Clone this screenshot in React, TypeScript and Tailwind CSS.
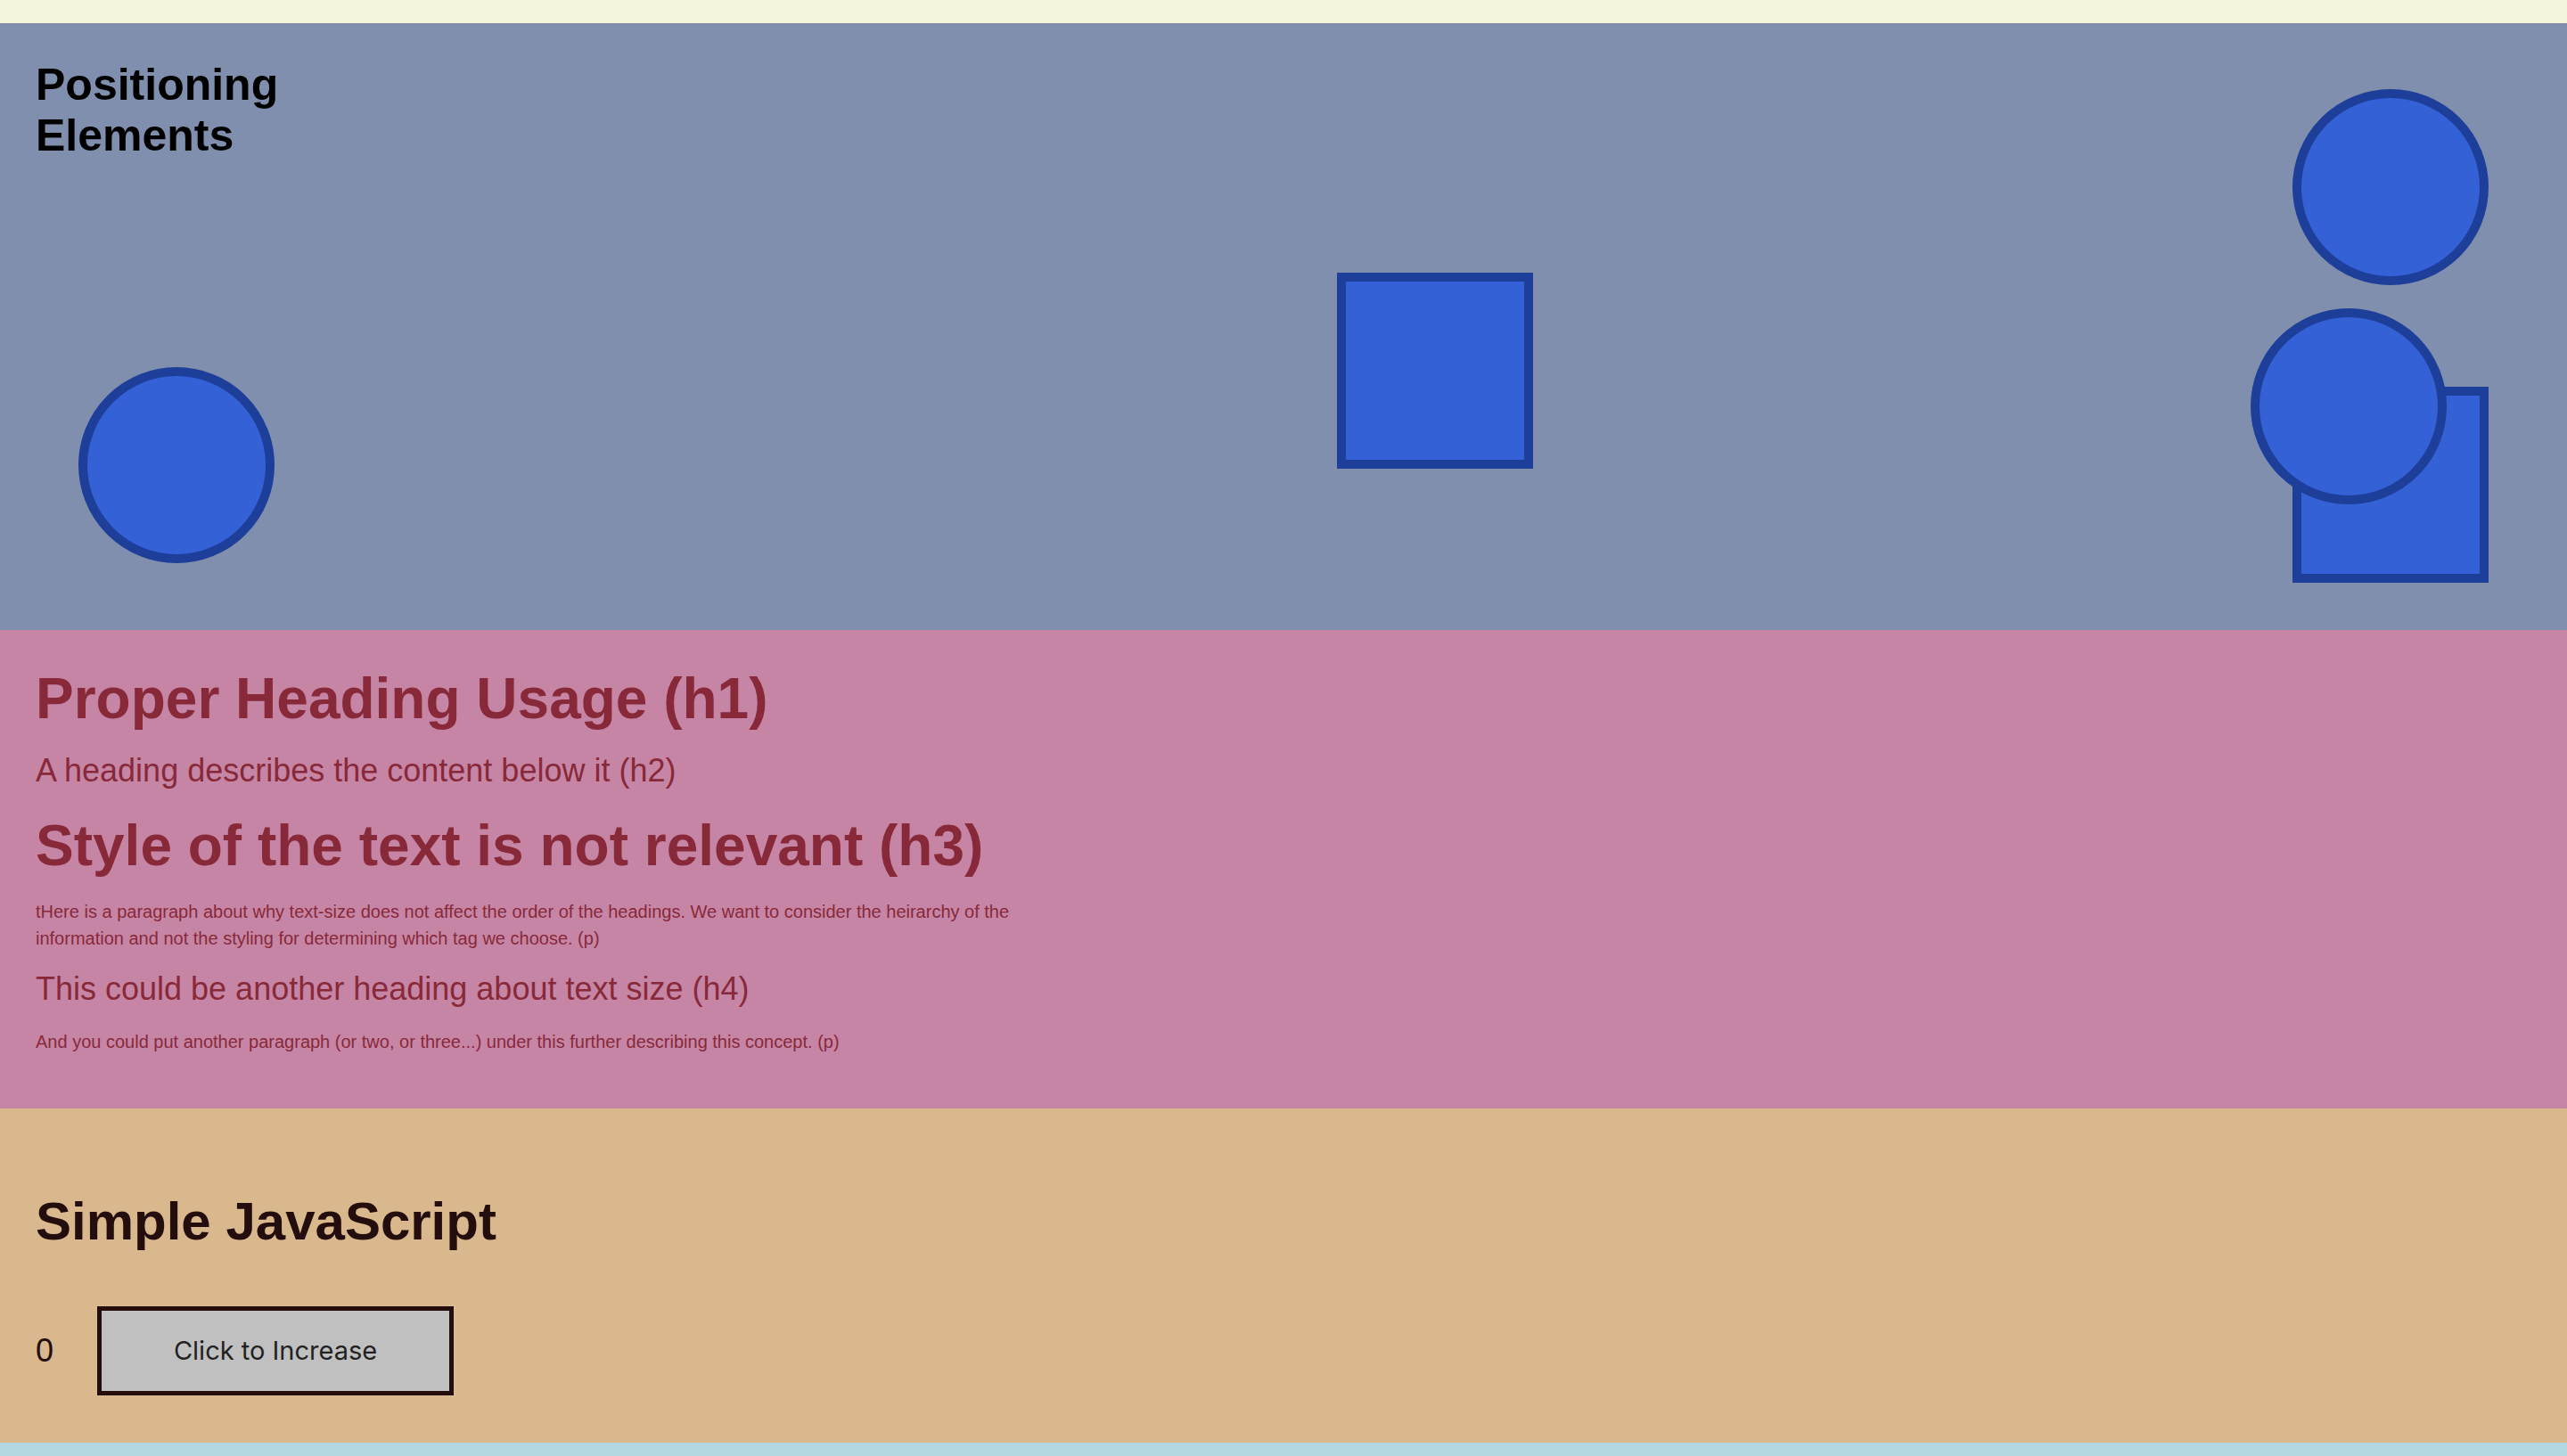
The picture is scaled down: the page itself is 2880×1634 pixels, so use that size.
import React, { useState } from "react";

const sans = { fontFamily: '"Liberation Sans", Arial, Helvetica, sans-serif' };

function Circle({ className }: { className: string }) {
  return (
    <div
      className={`absolute h-[220px] w-[220px] rounded-full border-[10px] border-[#1d3e99] bg-[#3461d6] ${className}`}
    />
  );
}

function Square({ className }: { className: string }) {
  return (
    <div
      className={`absolute h-[220px] w-[220px] border-[10px] border-[#1d3e99] bg-[#3461d6] ${className}`}
    />
  );
}

export default function App() {
  const [count, setCount] = useState(0);
  return (
    <div className="flex h-[1634px] w-full flex-col overflow-hidden" style={sans}>
      <div className="h-[26px] shrink-0 bg-[#f5f5dc]" />

      <section className="relative h-[681px] shrink-0 bg-[#818fae] px-[40px] pt-[41px]">
        <h2 className="w-[300px] text-[50px] font-bold leading-[57px] text-black">
          Positioning Elements
        </h2>
        <Circle className="left-[88px] top-[386px]" />
        <Square className="left-[1500px] top-[280px]" />
        <Circle className="left-[2572px] top-[74px]" />
        <Square className="left-[2572px] top-[408px]" />
        <Circle className="left-[2525px] top-[320px]" />
      </section>

      <section className="h-[537px] shrink-0 bg-[#c785a6] px-[40px] pt-[40px] text-[#872939]">
        <h1 className="text-[64px] font-bold leading-[74px]">Proper Heading Usage (h1)</h1>
        <h2 className="mt-[23px] text-[36px] font-normal leading-[42px]">
          A heading describes the content below it (h2)
        </h2>
        <h3 className="mt-[26px] text-[64px] font-bold leading-[74px]">
          Style of the text is not relevant (h3)
        </h3>
        <p className="mt-[22px] max-w-[1160px] text-[20px] leading-[30px]">
          tHere is a paragraph about why text-size does not affect the order of the headings. We want
          to consider the heirarchy of the information and not the styling for determining which tag
          we choose. (p)
        </p>
        <h4 className="mt-[21px] text-[36px] font-normal leading-[42px]">
          This could be another heading about text size (h4)
        </h4>
        <p className="mt-[23px] text-[20px] leading-[30px]">
          And you could put another paragraph (or two, or three...) under this further describing
          this concept. (p)
        </p>
      </section>

      <section className="h-[375px] shrink-0 bg-[#d8b88c] px-[40px] pt-[92px] text-[#230d0d]">
        <h2 className="text-[60px] font-bold leading-[69px]">Simple JavaScript</h2>
        <div className="mt-[61px] flex items-center gap-[49px]">
          <span className="text-[36px] leading-[42px]">{count}</span>
          <button
            onClick={() => setCount(count + 1)}
            className="h-[100px] w-[400px] border-[5px] border-[#230d0d] bg-[#c0c0c0] text-[29px] text-[#222222]"
            style={{ fontFamily: 'Inter, "Noto Sans", sans-serif' }}
          >
            Click to Increase
          </button>
        </div>
      </section>

      <div className="h-[15px] shrink-0 bg-[#b4d8e2]" />
    </div>
  );
}
